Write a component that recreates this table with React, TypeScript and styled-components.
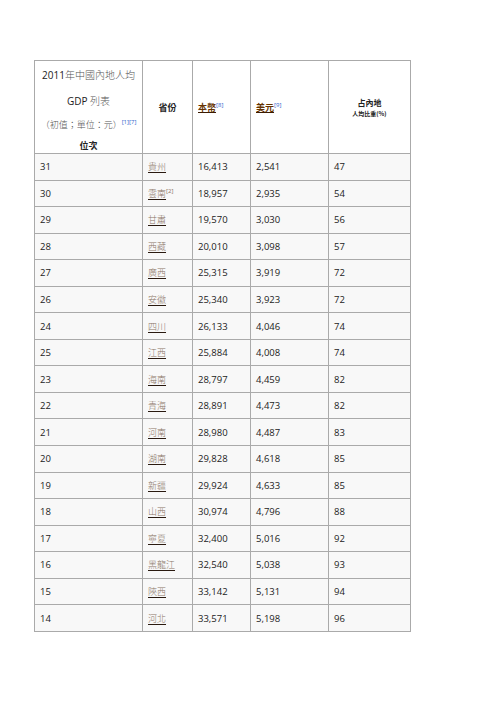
import React from 'react';
import styled, {createGlobalStyle} from 'styled-components';

const GlobalStyle = createGlobalStyle`
    body {
        margin: 0;
        background: #ffffff;
    }
`;

const Page = styled.div`
    padding: 60px 0 0 34px;
    font-family: "Open Sans", "Noto Sans CJK TC", sans-serif;
`;

const Table = styled.table`
    border-collapse: collapse;
    table-layout: fixed;
    width: 376px;
    color: #222222;
    font-size: 9.5px;
    td, th {
        border: 1px solid #aaaaaa;
        padding: 0 5px;
    }
`;

const HeadRow = styled.tr`
    height: 93px;
    background: #ffffff;
`;

const HeadCell = styled.th<{$align?: string}>`
    font-family: "Noto Sans CJK TC", sans-serif;
    font-weight: 700;
    font-size: 9px;
    text-align: ${(p) => p.$align || 'center'};
    vertical-align: middle;
`;

const TitleCell = styled.th`
    padding: 0 !important;
    font-weight: 400;
    vertical-align: top;
    text-align: center;
`;

const TitleLine = styled.div<{$h: number; $size?: number; $serif?: boolean; $bold?: boolean}>`
    height: ${(p) => p.$h}px;
    line-height: ${(p) => p.$h}px;
    font-size: ${(p) => p.$size || 10}px;
    font-weight: ${(p) => (p.$bold ? 700 : 400)};
    color: ${(p) => (p.$serif ? '#555555' : '#222222')};
    white-space: nowrap;
`;

const Cjk = styled.span`
    font-family: "Noto Sans CJK TC", sans-serif;
    font-weight: 300;
    color: #555555;
`;

const HeadLink = styled.span`
    color: #663300;
    text-decoration: underline;
    text-decoration-color: #3a1a00;
`;

const Sup = styled.sup`
    font-family: "Open Sans", sans-serif;
    font-weight: 400;
    font-size: 6px;
    color: #3366cc;
    vertical-align: 4px;
    line-height: 0;
`;

const Share = styled.div`
    font-size: 8px;
    line-height: 13px;
`;

const ShareSub = styled.div`
    font-size: 6px;
    line-height: 10px;
`;

const Row = styled.tr`
    height: 26.55px;
    background: #f8f8f8;
    td {
        vertical-align: middle;
        white-space: nowrap;
    }
`;

const Province = styled.a`
    font-family: "Noto Sans CJK TC", sans-serif;
    font-size: 9px;
    font-weight: 300;
    color: #8a7566;
    text-decoration: underline;
    text-decoration-color: #2a1a10;
    text-underline-offset: 2px;
`;

const rows: [string, string, string, string, string, string?][] = [
    ['31', '貴州', '16,413', '2,541', '47'],
    ['30', '雲南', '18,957', '2,935', '54', '[2]'],
    ['29', '甘肅', '19,570', '3,030', '56'],
    ['28', '西藏', '20,010', '3,098', '57'],
    ['27', '廣西', '25,315', '3,919', '72'],
    ['26', '安徽', '25,340', '3,923', '72'],
    ['24', '四川', '26,133', '4,046', '74'],
    ['25', '江西', '25,884', '4,008', '74'],
    ['23', '海南', '28,797', '4,459', '82'],
    ['22', '青海', '28,891', '4,473', '82'],
    ['21', '河南', '28,980', '4,487', '83'],
    ['20', '湖南', '29,828', '4,618', '85'],
    ['19', '新疆', '29,924', '4,633', '85'],
    ['18', '山西', '30,974', '4,796', '88'],
    ['17', '寧夏', '32,400', '5,016', '92'],
    ['16', '黑龍江', '32,540', '5,038', '93'],
    ['15', '陝西', '33,142', '5,131', '94'],
    ['14', '河北', '33,571', '5,198', '96'],
];

export default function App() {
    return (
        <Page>
            <GlobalStyle />
            <Table>
                <colgroup>
                    <col style={{width: 108}} />
                    <col style={{width: 50}} />
                    <col style={{width: 58}} />
                    <col style={{width: 78}} />
                    <col style={{width: 82}} />
                </colgroup>
                <thead>
                    <HeadRow>
                        <TitleCell>
                            <TitleLine $h={27}>
                                2011<Cjk>年中國內地人均</Cjk>
                            </TitleLine>
                            <TitleLine $h={25}>
                                GDP <Cjk>列表</Cjk>
                            </TitleLine>
                            <TitleLine $h={24} $size={9} $serif>
                                <Cjk>（初值；單位：元）</Cjk>
                                <Sup>[1][7]</Sup>
                            </TitleLine>
                            <TitleLine $h={16} $size={9}>
                                <HeadCell as='span'>位次</HeadCell>
                            </TitleLine>
                        </TitleCell>
                        <HeadCell>省份</HeadCell>
                        <HeadCell $align='left'>
                            <HeadLink>本幣</HeadLink>
                            <Sup>[8]</Sup>
                        </HeadCell>
                        <HeadCell $align='left'>
                            <HeadLink>美元</HeadLink>
                            <Sup>[9]</Sup>
                        </HeadCell>
                        <HeadCell>
                            <Share>占內地</Share>
                            <ShareSub>人均比重(%)</ShareSub>
                        </HeadCell>
                    </HeadRow>
                </thead>
                <tbody>
                    {rows.map(([rank, name, local, usd, share, note]) => (
                        <Row key={rank}>
                            <td>{rank}</td>
                            <td>
                                <Province href='#'>{name}</Province>
                                {note && <Sup style={{color: '#8a7566'}}>{note}</Sup>}
                            </td>
                            <td>{local}</td>
                            <td>{usd}</td>
                            <td>{share}</td>
                        </Row>
                    ))}
                </tbody>
            </Table>
        </Page>
    );
}
